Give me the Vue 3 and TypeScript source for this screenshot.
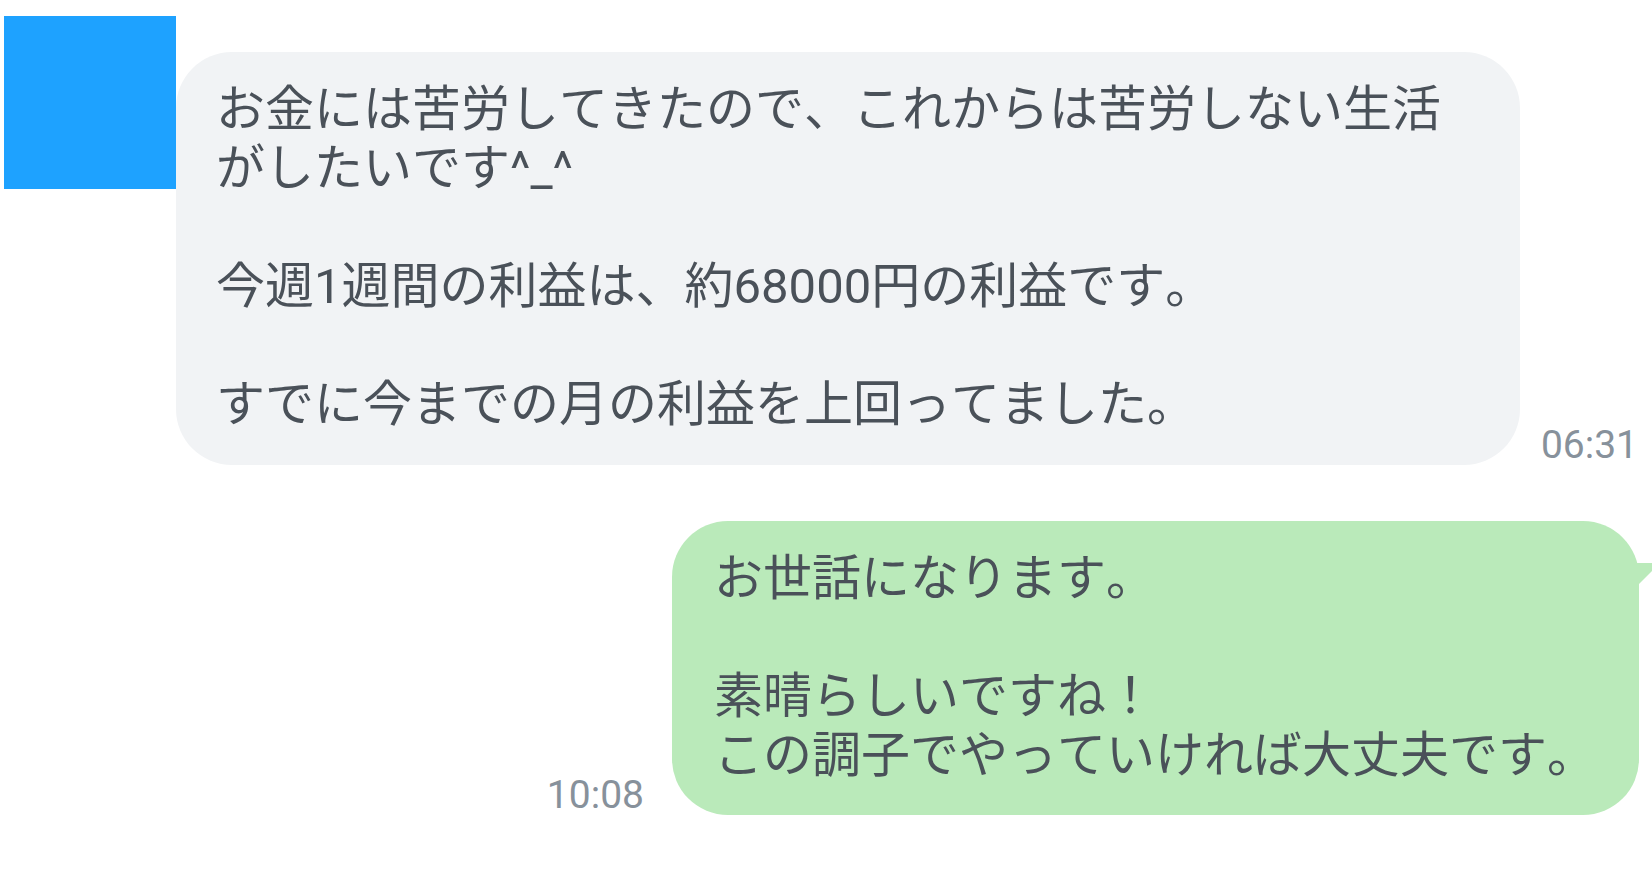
<script setup lang="ts">
interface Message {
  id: number
  side: 'incoming' | 'outgoing'
  text: string
  time: string
}

const messages: Message[] = [
  {
    id: 1,
    side: 'incoming',
    text: 'お金には苦労してきたので、これからは苦労しない生活がしたいです^_^\n\n今週1週間の利益は、約68000円の利益です。\n\nすでに今までの月の利益を上回ってました。',
    time: '06:31',
  },
  {
    id: 2,
    side: 'outgoing',
    text: 'お世話になります。\n\n素晴らしいですね！\nこの調子でやっていければ大丈夫です。',
    time: '10:08',
  },
]
</script>

<template>
  <main class="chat">
    <article v-for="m in messages" :key="m.id" class="message" :class="m.side">
      <div v-if="m.side === 'incoming'" class="avatar"></div>
      <div class="bubble">
        <p class="text">{{ m.text }}</p>
        <svg v-if="m.side === 'outgoing'" class="tail" viewBox="0 0 16 22" aria-hidden="true">
          <path d="M0 0H16V8L3 21H0Z" fill="#baeaba" />
        </svg>
      </div>
      <time class="time">{{ m.time }}</time>
    </article>
  </main>
</template>

<style>
body {
  background: #fff;
}
</style>

<style scoped>
.chat {
  box-sizing: border-box;
  display: flex;
  flex-direction: column;
  gap: 56px;
  padding: 16px 0 0 4px;
  font-family: Roboto, "Noto Sans CJK JP", sans-serif;
  font-kerning: none;
}
.message {
  display: flex;
  align-items: flex-end;
}
.incoming {
  padding-right: 14px;
}
.avatar {
  align-self: flex-start;
  flex: none;
  width: 172px;
  height: 173px;
  background: #1ea2ff;
}
.bubble {
  position: relative;
  box-sizing: border-box;
  border-radius: 56px;
  color: #4a5159;
}
.incoming .bubble {
  flex: 1;
  margin-top: 36px;
  padding: 28px 64px 31px 40px;
  background: #f1f3f5;
}
.outgoing {
  flex-direction: row-reverse;
  padding-right: 13px;
}
.outgoing .bubble {
  padding: 28px 43px 30px 42px;
  background: #baeaba;
}
.text {
  margin: 0;
  font-size: 49px;
  line-height: 59px;
  white-space: pre-wrap;
  text-spacing-trim: space-all;
}
.time {
  flex: none;
  color: #87919b;
  font-size: 39px;
  line-height: 40px;
}
.incoming .time {
  margin-left: 21px;
}
.outgoing .time {
  margin-right: 28px;
}
.tail {
  position: absolute;
  top: 42px;
  right: -13px;
  width: 16px;
  height: 22px;
}
</style>
